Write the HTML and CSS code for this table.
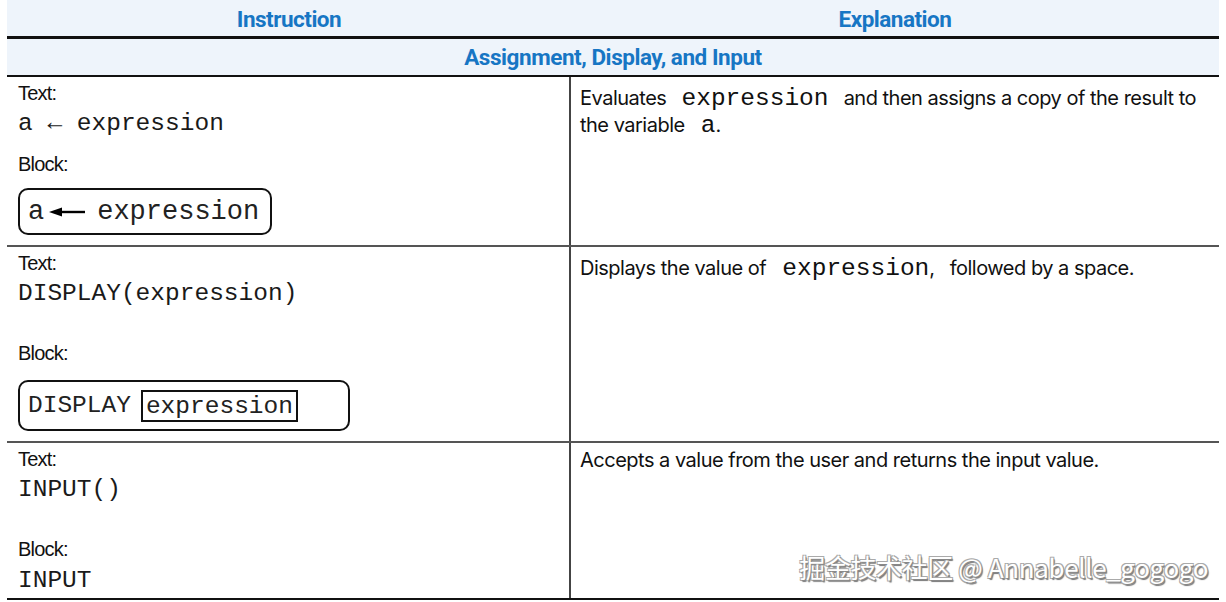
FILE: index.html
```html
<!DOCTYPE html>
<html lang="en">
<head>
<meta charset="utf-8">
<title>Assignment, Display, and Input</title>
<link rel="stylesheet" href="styles.css">
</head>
<body>
<div class="page">
  <div class="table">
    <div class="row head">
      <div class="hcell">Instruction</div>
      <div class="hcell">Explanation</div>
    </div>
    <div class="section">Assignment, Display, and Input</div>

    <div class="row body r1">
      <div class="cell left">
        <div class="label">Text:</div>
        <div class="code">a &larr; expression</div>
        <div class="label gap-s">Block:</div>
        <div class="block block-assign">
          <span>a</span>
          <svg class="arrow" width="36" height="10" viewBox="0 0 36 10"><path d="M0 5 L13 0.5 L13 9.5 Z" fill="#000"/><rect x="11" y="3.8" width="25" height="2.4" fill="#000"/></svg>
          <span>expression</span>
        </div>
      </div>
      <div class="cell right">
        <p class="expl">Evaluates <code class="ic">expression</code> and then assigns a copy of the result to the variable <code class="ic short">a</code>.</p>
      </div>
    </div>

    <div class="row body r2">
      <div class="cell left">
        <div class="label">Text:</div>
        <div class="code">DISPLAY(expression)</div>
        <div class="label gap-l">Block:</div>
        <div class="block block-display">
          <span>DISPLAY</span>
          <span class="inner">expression</span>
        </div>
      </div>
      <div class="cell right">
        <p class="expl">Displays the value of <code class="ic comma">expression</code>, <span class="sp"></span>followed by a space.</p>
      </div>
    </div>

    <div class="row body r3">
      <div class="cell left">
        <div class="label">Text:</div>
        <div class="code">INPUT()</div>
        <div class="label gap-l">Block:</div>
        <div class="code plain">INPUT</div>
      </div>
      <div class="cell right">
        <p class="expl single">Accepts a value from the user and returns the input value.</p>
      </div>
    </div>
  </div>
  <div class="watermark">掘金技术社区 @ Annabelle_gogogo</div>
</div>
</body>
</html>
```
FILE: styles.css
```css
html, body {
  margin: 0;
  padding: 0;
  background: #fff;
}
.page {
  position: relative;
  width: 1226px;
  height: 602px;
  overflow: hidden;
}
.table {
  margin-left: 7px;
  width: 1212px;
}
.row {
  display: grid;
  grid-template-columns: 564px 1fr;
}
.head {
  background: #eef4fb;
  height: 36px;
  border-bottom: 3px solid #111;
}
.hcell {
  display: flex;
  align-items: center;
  justify-content: center;
  font-family: Roboto, "Liberation Sans", sans-serif;
  font-weight: 700;
  font-size: 22.5px;
  letter-spacing: -0.5px;
  color: #1776c4;
  padding-top: 2px;
}
.section {
  background: #eef4fb;
  height: 36px;
  border-bottom: 2px solid #111;
  display: flex;
  align-items: center;
  justify-content: center;
  font-family: Roboto, "Liberation Sans", sans-serif;
  font-weight: 700;
  font-size: 22.5px;
  letter-spacing: -0.45px;
  color: #1776c4;
}
.body {
  border-bottom: 2px solid #555;
}
.r1 { height: 168px; }
.r2 { height: 194px; }
.r3 { height: 155px; border-bottom-color: #111; }
.cell.left {
  padding: 5px 0 0 11px;
  border-right: 2px solid #444;
}
.cell.right {
  padding: 8px 0 0 9px;
}
.r3 .cell.right { padding-top: 6px; }
.label {
  font-family: "Liberation Sans", Arial, sans-serif;
  font-size: 20px;
  line-height: 22px;
  letter-spacing: -0.8px;
  color: #111;
}
.gap-s { margin-top: 14px; }
.gap-l { margin-top: 33px; }
.code {
  font-family: "Liberation Mono", "Courier New", monospace;
  font-size: 24.5px;
  line-height: 30px;
  margin-top: 5px;
  color: #1a1a1a;
}
.code.plain { margin-top: 6px; }
.block {
  margin-top: 13px;
  display: inline-flex;
  align-items: center;
  border: 2px solid #111;
  border-radius: 10px;
  font-family: "Liberation Mono", "Courier New", monospace;
  color: #222;
  box-sizing: border-box;
}
.block-assign {
  width: 254px;
  height: 47px;
  padding-left: 8px;
  font-size: 27px;
}
.block-assign .arrow {
  margin: 0 12px 0 5px;
}
.block-display {
  margin-top: 16px;
  width: 332px;
  height: 51px;
  padding-left: 8px;
  font-size: 24.5px;
}
.block-display .inner {
  margin-left: 10px;
  border: 2px solid #111;
  height: 32px;
  line-height: 30px;
  padding: 0 3px;
  box-sizing: border-box;
  display: inline-block;
}
.expl {
  margin: 0;
  font-family: Inter, "Liberation Sans", sans-serif;
  font-size: 20px;
  line-height: 26px;
  letter-spacing: -0.5px;
  color: #111;
  width: 630px;
}
.expl.single { line-height: 22px; }
.ic {
  font-family: "Liberation Mono", "Courier New", monospace;
  font-size: 24.5px;
  line-height: 1;
  letter-spacing: 0;
  color: #111;
  margin: 0 10px;
}
.ic.comma { margin: 0 0 0 11px; }
.ic.short { margin: 0 0 0 11px; }
.sp { display: inline-block; width: 10px; }
.watermark {
  position: absolute;
  right: 18px;
  top: 549px;
  font-family: "Noto Sans CJK SC", "Noto Sans", sans-serif;
  font-size: 26px;
  line-height: 36px;
  color: #fff;
  letter-spacing: -0.4px;
  text-shadow: 1px 1px 0 #888, -1px -1px 0 #aaa, 1px -1px 0 #aaa, -1px 1px 0 #aaa, 1.5px 1.5px 1px #777;
}
```
